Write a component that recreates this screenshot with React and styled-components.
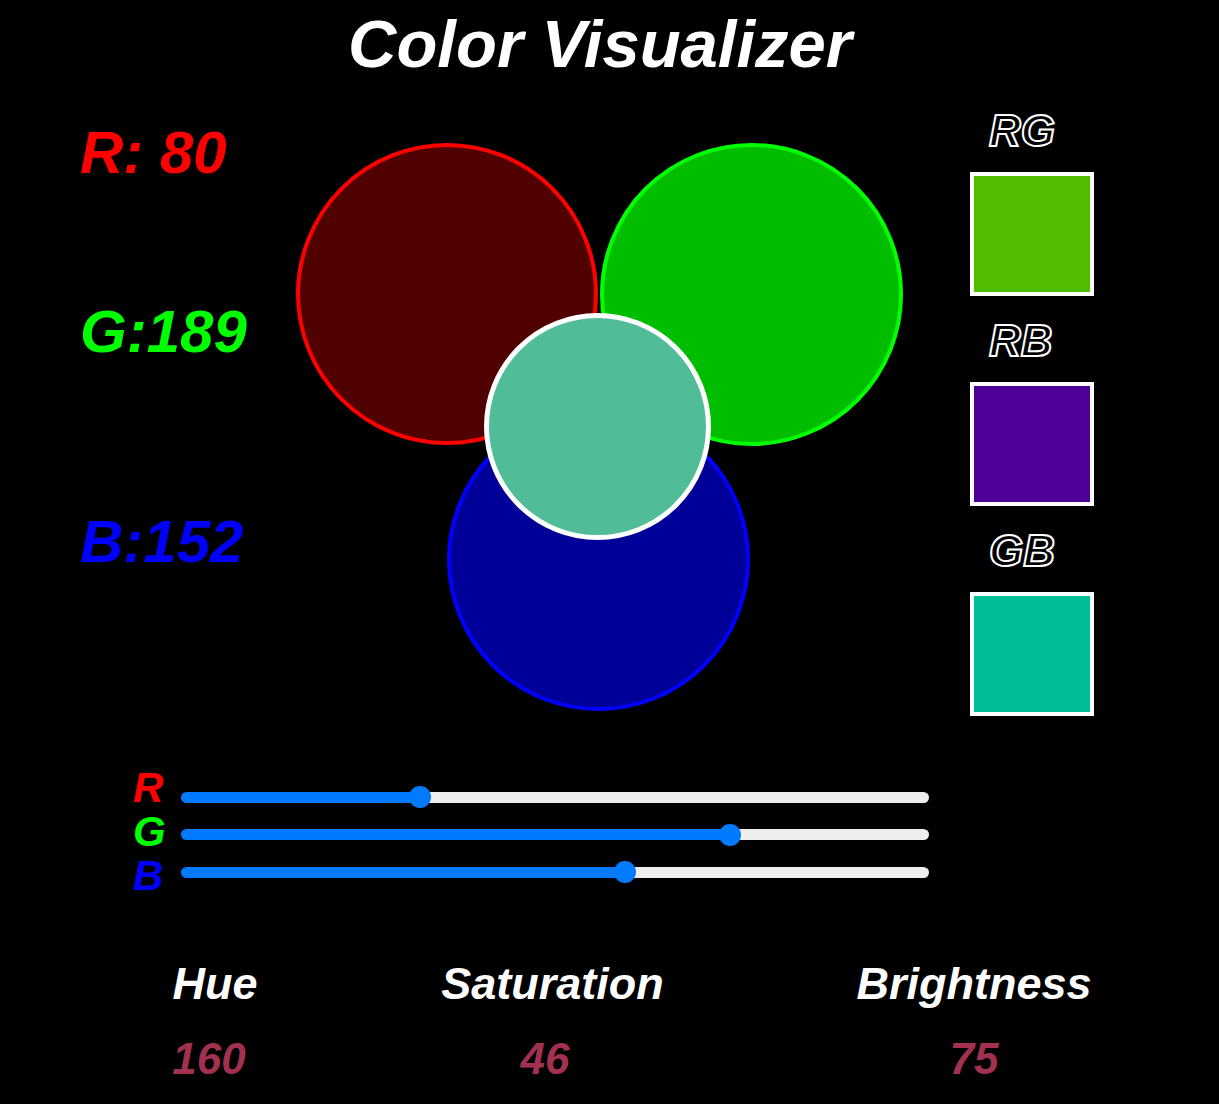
import React, { useState } from 'react';
import styled, { createGlobalStyle } from 'styled-components';

const GlobalStyle = createGlobalStyle`
  html, body {
    margin: 0;
    padding: 0;
    background: #000000;
  }
  body {
    font-family: "Liberation Sans", Arial, sans-serif;
    font-weight: bold;
    font-style: italic;
    color: #ffffff;
  }
  * { box-sizing: border-box; }
`;

const Page = styled.div`
  width: 1200px;
  padding-top: 12px;
  padding-bottom: 20px;
`;

const Title = styled.h1`
  margin: 0;
  font-size: 67px;
  line-height: 64px;
  font-weight: bold;
  font-style: italic;
  text-align: center;
  color: #ffffff;
`;

const Main = styled.section`
  margin-top: 24px;
  padding-left: 80px;
  display: grid;
  grid-template-columns: 216px 607px 124px;
  align-items: start;
`;

const ValueColumn = styled.div`
  display: flex;
  flex-direction: column;
  padding-top: 23px;
`;

const ChannelValue = styled.div`
  font-size: 60px;
  line-height: 60px;
  color: ${(p) => p.$color};
  margin-top: ${(p) => p.$gap}px;
  white-space: nowrap;
`;

const Venn = styled.div`
  position: relative;
  width: 607px;
  height: 568px;
  margin-top: 43px;
`;

const Circle = styled.div`
  position: absolute;
  left: ${(p) => p.$x}px;
  top: ${(p) => p.$y}px;
  width: ${(p) => p.$size}px;
  height: ${(p) => p.$size}px;
  border-radius: 50%;
  background: ${(p) => p.$fill};
  border: ${(p) => p.$stroke}px solid ${(p) => p.$ring};
`;

const MixColumn = styled.div`
  margin-left: 67px;
  padding-top: 9px;
  display: flex;
  flex-direction: column;
  gap: 23px;
  width: 124px;
`;

const MixGroup = styled.div`
  display: flex;
  flex-direction: column;
  align-items: flex-start;
`;

const MixLabel = styled.div`
  font-size: 44px;
  line-height: 44px;
  margin-left: 19px;
  margin-bottom: 19px;
  color: #000000;
  -webkit-text-stroke: 2px #ffffff;
  white-space: nowrap;
`;

const Swatch = styled.div`
  width: 124px;
  height: 124px;
  border: 4px solid #ffffff;
  background: ${(p) => p.$fill};
`;

const SliderSection = styled.section`
  margin-top: 50px;
  padding-left: 133px;
  display: flex;
  align-items: flex-start;
`;

const SliderLabels = styled.div`
  width: 48px;
  display: flex;
  flex-direction: column;
`;

const SliderLabel = styled.div`
  font-size: 42px;
  line-height: 44px;
  color: ${(p) => p.$color};
`;

const SliderStack = styled.div`
  padding-top: 20px;
  display: flex;
  flex-direction: column;
  gap: 15.5px;
`;

const Range = styled.input.attrs({ type: 'range', min: 0, max: 255 })`
  -webkit-appearance: none;
  appearance: none;
  display: block;
  width: 748px;
  height: 22px;
  margin: 0;
  padding: 0;
  background: transparent;
  outline: none;
  cursor: pointer;

  &::-webkit-slider-runnable-track {
    height: 11px;
    border-radius: 6px;
    background: linear-gradient(
      to right,
      #007bff ${(p) => p.$fill}%,
      #eeeeee ${(p) => p.$fill}%
    );
  }
  &::-webkit-slider-thumb {
    -webkit-appearance: none;
    appearance: none;
    width: 22px;
    height: 22px;
    border-radius: 50%;
    border: none;
    background: #007bff;
    margin-top: -5.5px;
  }
`;

const Stats = styled.section`
  margin-top: 64px;
  padding-left: 113px;
  display: grid;
  grid-template-columns: 204px 471px 372px;
`;

const Stat = styled.div`
  display: flex;
  flex-direction: column;
  align-items: center;
`;

const StatLabel = styled.div`
  font-size: 45px;
  line-height: 44px;
  color: #ffffff;
`;

const StatValue = styled.div`
  margin-top: 31px;
  margin-right: ${(p) => p.$shift || 0}px;
  font-size: 44px;
  line-height: 44px;
  color: #a2304f;
`;

function toStats(r, g, b) {
  const max = Math.max(r, g, b);
  const min = Math.min(r, g, b);
  const d = max - min;
  let h = 0;
  if (d !== 0) {
    if (max === r) h = 60 * (((g - b) / d) % 6);
    else if (max === g) h = 60 * ((b - r) / d + 2);
    else h = 60 * ((r - g) / d + 4);
  }
  if (h < 0) h += 360;
  const l = (max + min) / 2 / 255;
  const s = d === 0 ? 0 : d / 255 / (1 - Math.abs(2 * l - 1));
  return {
    hue: Math.ceil(h),
    sat: Math.ceil(s * 100),
    bri: Math.ceil((max / 255) * 100),
  };
}

const fillPct = (v) => ((11 + (v / 255) * 726) / 748) * 100;

export default function App() {
  const [r, setR] = useState(80);
  const [g, setG] = useState(189);
  const [b, setB] = useState(152);
  const { hue, sat, bri } = toStats(r, g, b);

  const rgb = (a, c, d) => `rgb(${a}, ${c}, ${d})`;

  return (
    <>
      <GlobalStyle />
      <Page>
        <Title>Color Visualizer</Title>
        <Main>
          <ValueColumn>
            <ChannelValue $color="#ff0000" $gap={0}>R: {r}</ChannelValue>
            <ChannelValue $color="#00ff00" $gap={119}>G:{g}</ChannelValue>
            <ChannelValue $color="#0000ff" $gap={150}>B:{b}</ChannelValue>
          </ValueColumn>
          <Venn>
            <Circle $x={0} $y={0} $size={302} $stroke={4} $ring="#ff0000" $fill={rgb(r, 0, 0)} />
            <Circle $x={304} $y={0} $size={303} $stroke={4} $ring="#00ff00" $fill={rgb(0, g, 0)} />
            <Circle $x={151} $y={265} $size={303} $stroke={4} $ring="#0000ff" $fill={rgb(0, 0, b)} />
            <Circle $x={188} $y={170} $size={227} $stroke={5} $ring="#ffffff" $fill={rgb(r, g, b)} />
          </Venn>
          <MixColumn>
            <MixGroup>
              <MixLabel>RG</MixLabel>
              <Swatch $fill={rgb(r, g, 0)} />
            </MixGroup>
            <MixGroup>
              <MixLabel>RB</MixLabel>
              <Swatch $fill={rgb(r, 0, b)} />
            </MixGroup>
            <MixGroup>
              <MixLabel>GB</MixLabel>
              <Swatch $fill={rgb(0, g, b)} />
            </MixGroup>
          </MixColumn>
        </Main>
        <SliderSection>
          <SliderLabels>
            <SliderLabel $color="#ff0000">R</SliderLabel>
            <SliderLabel $color="#00ff00">G</SliderLabel>
            <SliderLabel $color="#0000ff">B</SliderLabel>
          </SliderLabels>
          <SliderStack>
            <Range value={r} $fill={fillPct(r)} onChange={(e) => setR(+e.target.value)} />
            <Range value={g} $fill={fillPct(g)} onChange={(e) => setG(+e.target.value)} />
            <Range value={b} $fill={fillPct(b)} onChange={(e) => setB(+e.target.value)} />
          </SliderStack>
        </SliderSection>
        <Stats>
          <Stat>
            <StatLabel>Hue</StatLabel>
            <StatValue $shift={12}>{hue}</StatValue>
          </Stat>
          <Stat>
            <StatLabel>Saturation</StatLabel>
            <StatValue $shift={15}>{sat}</StatValue>
          </Stat>
          <Stat>
            <StatLabel>Brightness</StatLabel>
            <StatValue>{bri}</StatValue>
          </Stat>
        </Stats>
      </Page>
    </>
  );
}
